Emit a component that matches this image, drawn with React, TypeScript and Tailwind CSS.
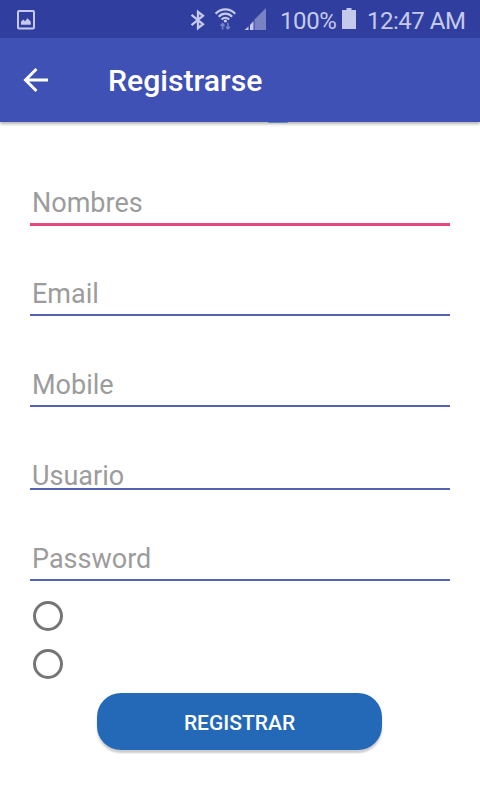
import React from "react";

function StatusBar() {
  return (
    <div className="flex h-[38px] items-center bg-[#303f9f] text-[#c5caec]">
      <svg className="ml-[15px] mt-[2px] h-[22px] w-[20px] shrink-0" viewBox="0 0 20 22" fill="none">
        <rect x="3" y="2" width="16" height="17.500" rx="1" stroke="currentColor" strokeWidth="2" />
        <path d="M6 15.8v-3l2.200-2.200 1.700 1.700 2.700-3.100 3.200 3.600v3z" fill="currentColor" />
      </svg>
      <svg className="ml-[155px] mt-[2px] h-[22px] w-[16px] shrink-0" viewBox="0 0 16 22" fill="none">
        <path d="M1.500 5.800l11.500 9.400L8 19.200V2.800L13 6.800 1.500 16.200" stroke="currentColor" strokeWidth="2.300" />
      </svg>
      <svg className="ml-[8px] h-[24px] w-[24px] shrink-0" viewBox="0 0 24 24" fill="none">
        <g stroke="currentColor" strokeWidth="2.200">
          <path d="M1.600 6.700c5.200-5.900 14.400-5.900 19.600 0" />
          <path d="M4.700 9.700c3.700-4 9.700-4 13.400 0" />
          <path d="M7.600 12.500c2.200-2.200 5.400-2.200 7.600 0" />
        </g>
        <circle cx="11.400" cy="14" r="1.600" fill="currentColor" />
        <path d="M8.600 22.500v-6M6.600 18.800l2-2.200 2 2.200M13.900 15.800v6M11.900 19.700l2 2.200 2-2.200" stroke="#7983c4" strokeWidth="1.600" />
      </svg>
      <svg className="ml-[6px] h-[22px] w-[22px] shrink-0" viewBox="0 0 22 22">
        <path d="M10.500 11.500L22 0v22H10.500z" fill="#7983c4" />
        <path d="M.5 22L4.500 18.500V22zM6 17l3.500-4V22H6z" fill="currentColor" />
      </svg>
      <span className="ml-[14px] mt-[3px] w-[57px] shrink-0 whitespace-nowrap text-[24px] leading-[28px] tracking-[-0.4px]">100%</span>
      <svg className="ml-[4px] h-[22px] w-[16px] shrink-0" viewBox="0 0 16 22">
        <path d="M5.500 0h5v2h4.500v19H1V2h4.500z" fill="currentColor" />
      </svg>
      <span className="ml-[10px] mt-[4px] whitespace-nowrap text-[24px] leading-[28px] tracking-[-0.5px]">12:47 AM</span>
    </div>
  );
}

function AppBar() {
  return (
    <header className="relative flex h-[84px] items-center bg-[#3f51b5] text-white shadow-[0_2px_3px_rgba(0,0,0,0.3)]">
      <button className="ml-[23px] h-[26px] w-[26px]" aria-label="Volver">
        <svg className="h-[26px] w-[26px]" viewBox="0 0 26 26" fill="none">
          <path d="M25 13H3M13.500 2L2.500 13l11 11" stroke="white" strokeWidth="3" />
        </svg>
      </button>
      <h1 className="ml-[59px] mt-[1px] text-[30.200px] font-medium leading-[36px]">Registrarse</h1>
      <span className="absolute left-[268px] top-[84px] h-[1px] w-[20px] rounded-b-full bg-[#5c86ad]" />
    </header>
  );
}

const fields = [
  { label: "Nombres", row: "h-[77px]", line: "mt-[4px] h-[3px] bg-[#e8467f]" },
  { label: "Email", row: "h-[84px]", line: "mt-[4px] h-[2px] bg-[#5562b0]" },
  { label: "Mobile", row: "h-[85px]", line: "mt-[4px] h-[2px] bg-[#5562b0]" },
  { label: "Usuario", row: "h-[85px]", line: "-mt-[4px] h-[2px] bg-[#5562b0]" },
  { label: "Password", row: "h-[85px]", line: "mt-[4px] h-[2px] bg-[#5562b0]" },
];

export default function App() {
  return (
    <div className="flex h-[800px] w-[480px] flex-col overflow-hidden bg-white font-['Roboto',sans-serif]">
      <StatusBar />
      <AppBar />
      <main className="flex flex-col px-[30px] pt-[20px]">
        {fields.map((f) => (
          <div key={f.label} className="flex flex-col">
            <span className={`flex items-end pl-[2px] text-[27px] leading-[32px] text-[#9c9c9c] ${f.row}`}>{f.label}</span>
            <div className={f.line} />
          </div>
        ))}
        <div className="ml-[3px] mt-[20px] flex flex-col gap-[18px]">
          <span className="h-[30px] w-[30px] rounded-full border-[3px] border-[#757575]" />
          <span className="h-[30px] w-[30px] rounded-full border-[3px] border-[#757575]" />
        </div>
        <button className="ml-[67px] mt-[14px] h-[57px] w-[285px] rounded-[24px] bg-[#2468b8] pt-[5px] text-[21px] font-medium text-white shadow-[0_3px_2px_rgba(0,0,0,0.2)]">
          REGISTRAR
        </button>
      </main>
    </div>
  );
}
